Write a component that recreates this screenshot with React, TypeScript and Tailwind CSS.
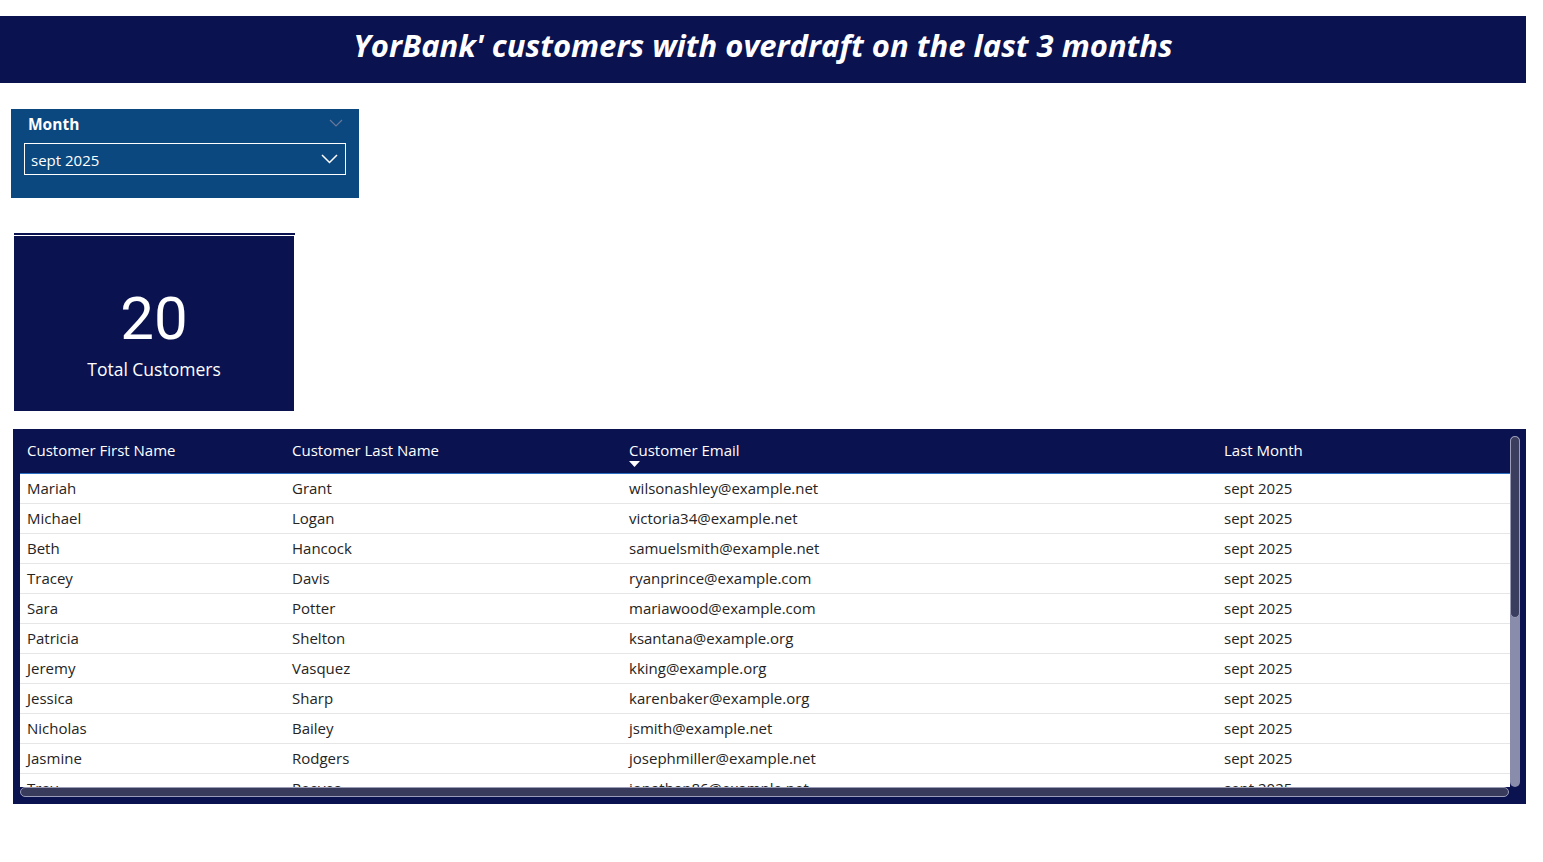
import React from "react";

const rows: [string, string, string, string][] = [
  ["Mariah", "Grant", "wilsonashley@example.net", "sept 2025"],
  ["Michael", "Logan", "victoria34@example.net", "sept 2025"],
  ["Beth", "Hancock", "samuelsmith@example.net", "sept 2025"],
  ["Tracey", "Davis", "ryanprince@example.com", "sept 2025"],
  ["Sara", "Potter", "mariawood@example.com", "sept 2025"],
  ["Patricia", "Shelton", "ksantana@example.org", "sept 2025"],
  ["Jeremy", "Vasquez", "kking@example.org", "sept 2025"],
  ["Jessica", "Sharp", "karenbaker@example.org", "sept 2025"],
  ["Nicholas", "Bailey", "jsmith@example.net", "sept 2025"],
  ["Jasmine", "Rodgers", "josephmiller@example.net", "sept 2025"],
  ["Troy", "Reeves", "jonathan86@example.net", "sept 2025"],
];

const font = { fontFamily: '"Open Sans", "Noto Sans", sans-serif' };

export default function App() {
  return (
    <div className="w-[1543px] h-[862px] bg-white relative overflow-hidden" style={font}>
      <div className="pt-[16px]">
        <div className="w-[1526px] h-[67px] bg-[#0a1250] flex items-center justify-center">
          <h1 className="text-white italic font-bold text-[31px] leading-none pb-[9px]">
            YorBank' customers with overdraft on the last 3 months
          </h1>
        </div>
      </div>

      <div className="mt-[26px] ml-[11px] w-[348px] h-[89px] bg-[#0b4880] px-[13px] pt-[6px]">
        <div className="flex items-center justify-between h-[20px]">
          <span className="text-white font-bold text-[15.5px] leading-none ml-[4px]">Month</span>
          <svg width="14" height="8" viewBox="0 0 14 8" className="mr-[3px] -mt-[4px]">
            <path d="M1 1 L7 7 L13 1" fill="none" stroke="#6a7898" strokeWidth="1.2" />
          </svg>
        </div>
        <div className="mt-[8px] h-[32px] border border-white flex items-center justify-between px-[6px]">
          <span className="text-white text-[15px] leading-none mt-[3px]">sept 2025</span>
          <svg width="17" height="10" viewBox="0 0 17 10" className="mr-[1px]">
            <path d="M1 1 L8.5 8.5 L16 1" fill="none" stroke="white" strokeWidth="1.5" />
          </svg>
        </div>
      </div>

      <div className="mt-[35px] ml-[14px] w-[281px] h-[2px] bg-[#0a1250]" />
      <div className="mt-[1px] ml-[14px] w-[280px] h-[175px] bg-[#0a1250] flex flex-col items-center">
        <div className="text-white text-[60px] leading-none mt-[53px]" style={{ fontFamily: 'Roboto, "Open Sans", sans-serif' }}>
          20
        </div>
        <div className="text-white text-[17.5px] leading-none mt-[12px]">Total Customers</div>
      </div>

      <div className="mt-[18px] ml-[13px] w-[1513px] h-[375px] bg-[#0a1250] relative pl-[7px] pr-[16px]">
        <div className="h-[44px] flex text-white text-[15px]">
          <div className="w-[265px] pl-[7px] pt-[10px]">Customer First Name</div>
          <div className="w-[337px] pl-[7px] pt-[10px]">Customer Last Name</div>
          <div className="w-[595px] pl-[7px] pt-[10px] relative">
            Customer Email
            <svg width="11" height="6" viewBox="0 0 11 6" className="absolute left-[7px] top-[32px]">
              <path d="M0 0 L11 0 L5.5 6 Z" fill="white" />
            </svg>
          </div>
          <div className="flex-1 pl-[7px] pt-[10px]">Last Month</div>
        </div>
        <div className="h-[1px] bg-[#2b6fc2] w-[1490px]" />
        <div className="bg-white w-[1490px] h-[313px] overflow-hidden">
          {rows.map((r, i) => (
            <div key={i} className="h-[30px] flex items-center border-b border-[#e6e6e6] text-[15px] text-[#252423]">
              <div className="w-[265px] pl-[7px]">{r[0]}</div>
              <div className="w-[337px] pl-[7px]">{r[1]}</div>
              <div className="w-[595px] pl-[7px]">{r[2]}</div>
              <div className="flex-1 pl-[7px]">{r[3]}</div>
            </div>
          ))}
        </div>

        {/* vertical scrollbar */}
        <div className="absolute left-[1497px] top-[7px] w-[10px] h-[351px] rounded-[5px] bg-[#8a8cab]">
          <div className="w-[10px] h-[182px] rounded-[5px] bg-[#3a3d5e] border border-[#9a9cb8]" />
        </div>
        {/* horizontal scrollbar */}
        <div className="absolute left-[7px] top-[358px] w-[1489px] h-[10px] rounded-[5px] bg-[#383b5b] border border-[#9a9cb8]" />
      </div>
    </div>
  );
}
